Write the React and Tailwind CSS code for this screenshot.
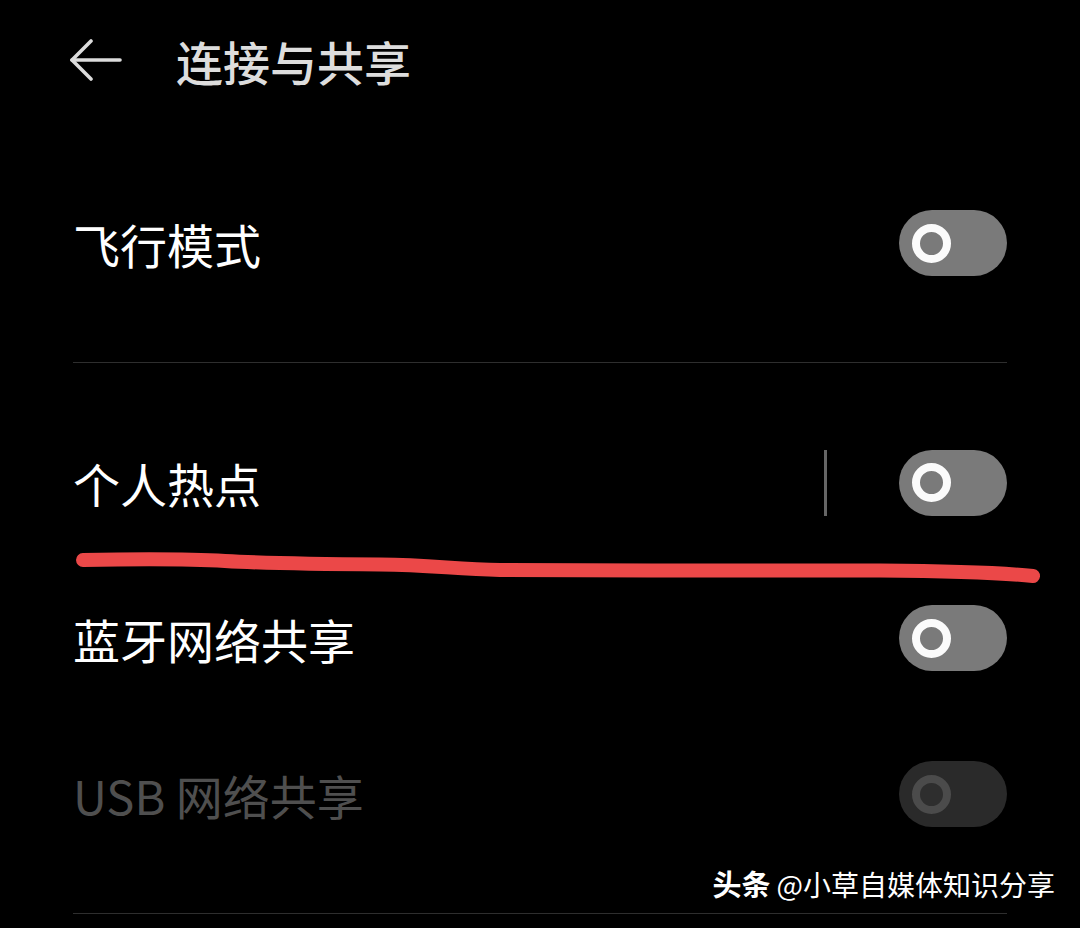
import React from "react";

const ROWS = [
  { label: "蓝牙网络共享", on: false, disabled: false },
  { label: "USB 网络共享", on: false, disabled: true },
];

function Toggle({ disabled }) {
  return (
    <div
      className={`w-[108px] h-[66px] rounded-full flex items-center pl-[13px] shrink-0 ${
        disabled ? "bg-[#2a2a2a]" : "bg-[#7a7a7a]"
      }`}
    >
      <div
        className={`w-[39px] h-[39px] rounded-full border-[8px] ${
          disabled ? "border-[#4b4b4b] bg-[#2e2e2e]" : "border-[#fbfbfb] bg-[#7a7a7a]"
        }`}
      />
    </div>
  );
}

function BackArrow() {
  return (
    <svg width="54" height="42" viewBox="0 0 54 42" fill="none" stroke="#dcdcdc" strokeWidth="3.6" strokeLinecap="round" strokeLinejoin="round">
      <path d="M3 21 H51" />
      <path d="M22 2 L3 21 L22 40" />
    </svg>
  );
}

export default function App() {
  return (
    <div
      className="relative w-[1080px] h-[928px] bg-black overflow-hidden text-white"
      style={{ fontFamily: '"Noto Sans CJK SC", "Noto Sans", sans-serif' }}
    >
      {/* header */}
      <div className="h-[120px] flex items-center pl-[69px]">
        <BackArrow />
        <h1 className="ml-[53px] text-[47px] leading-none font-medium text-[#dddddd]">连接与共享</h1>
      </div>

      <div className="px-[73px] mt-[45px]">
        <div className="h-[156px] flex items-center justify-between">
          <span className="text-[47px] leading-none">飞行模式</span>
          <Toggle />
        </div>

        <div className="mt-[41px] h-px bg-[#2e2e2e]" />

        <div className="mt-[42px] h-[155px] flex items-center">
          <span className="text-[47px] leading-none flex-1">个人热点</span>
          <div className="w-[3px] h-[66px] bg-[#666666] mr-[72px]" />
          <Toggle />
        </div>

        {ROWS.map((row) => (
          <div key={row.label} className="h-[156px] flex items-center justify-between">
            <span className={`text-[47px] leading-none ${row.disabled ? "text-[#4f4f4f]" : "text-white"}`}>
              {row.label}
            </span>
            <Toggle disabled={row.disabled} />
          </div>
        ))}
      </div>

      <div className="mt-[41px] ml-[73px] mr-[73px] h-px bg-[#2e2e2e]" />

      {/* hand-drawn red underline */}
      <svg className="absolute left-0 top-0 pointer-events-none" width="1080" height="928">
        <path
          d="M83 560 C140 559 190 559 225 561 C260 563 300 564 380 564.5 C430 565 455 569 500 570 C620 571 800 570 880 570.5 C940 571 995 572 1033 576"
          fill="none"
          stroke="#eb4848"
          strokeWidth="14"
          strokeLinecap="round"
          strokeLinejoin="round"
        />
      </svg>

      {/* watermark */}
      <div className="absolute right-[25px] top-[869px] leading-none text-white [text-shadow:0_0_3px_rgba(0,0,0,0.8)]">
        <span className="font-bold text-[29px]">头条</span>
        <span className="ml-[6px] text-[28px]">@小草自媒体知识分享</span>
      </div>
    </div>
  );
}
